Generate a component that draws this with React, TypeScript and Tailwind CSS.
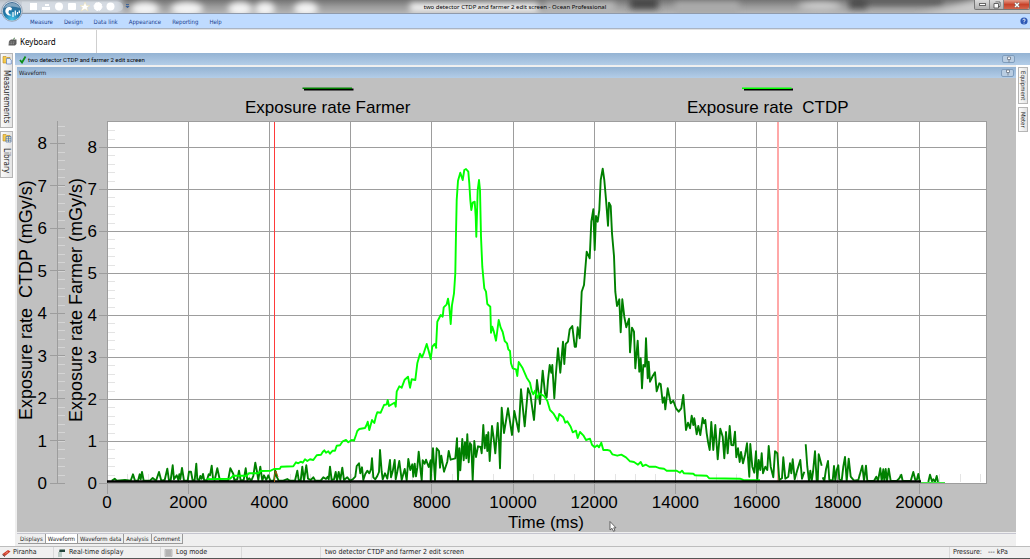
import type { ReactNode } from "react";
import clsx from "clsx";

type Segment = { x: number; y: number; pts: string };

const CTDP: Segment[] = [
  { x: 0, y: 290, pts: "620,568 690,566 700,557 740,557 746,550 775,550 782,543 812,542" },
  { x: 270, y: 380, pts: "12,267 30,266 33,260 70,259 78,247 85,250 92,245 98,248 105,238 112,243 120,238 130,240 140,226 153,224 158,216 163,211 168,218 175,214 180,221 188,212 195,212 200,197 210,196 218,184 228,180 235,187 245,180 252,182 258,165 262,153 268,147 285,144 290,134 293,125 298,150 306,120 313,129 318,108 322,97 332,98 342,75 350,73 353,60 357,78 367,72 374,68 377,80" },
  { x: 396, y: 335, pts: "2,170 10,154 17,158 26,134 36,125 42,158 47,133 58,135 64,85 72,56 78,67 84,52 92,27 98,48 104,72 109,35 116,27 121,38" },
  { x: 430, y: 150, pts: "18,593 22,515 32,495 38,500 41,472 50,463 54,446 58,470 62,522 66,465 72,430 76,370 78,250 80,150 84,92 91,68 98,90 103,60 108,57 115,65 118,100 121,150 124,180 128,158 134,155 137,200 139,260 143,120 147,90 150,120 153,260 157,350 163,415 168,425 172,462 181,470 183,548 187,530 191,543 198,572 206,510 212,533 218,546 224,573 231,580 235,598 240,603 243,640 248,655 258,658 262,678 266,636 278,655 290,683 300,698 305,722" },
  { x: 500, y: 360, pts: "95,93 100,103 105,92 112,114 118,100 132,108 142,122 150,150 160,160 173,182 178,162 190,172 196,188 202,184 212,200 218,217 228,212 233,234 240,216 250,226 258,240 270,236 276,254 284,262 292,256 297,262 304,248 310,270 322,270 330,272 337,283 352,287 364,284 378,292 390,304 402,306 414,314 422,306 428,318 438,314 448,320 466,320" },
  { x: 660, y: 370, pts: "0,295 12,296 20,302 50,302 60,308 66,302 72,310 100,311 105,316 140,317 148,325 240,326 250,330 300,331" },
];

const FARMER: Segment[] = [
  { x: 0, y: 290, pts: "335,572 344,566 350,572 375,570 392,572 399,553 405,572 414,572 419,553 422,568 426,546 431,572 450,572 458,564 468,572 477,546 484,572 494,570 502,536 507,572 512,570 518,526 522,568 530,556 535,570 538,553 541,567 546,534 552,572 563,572 567,545 573,545 578,572 584,570 589,521 592,568 598,570 601,558 605,566 609,552 613,572 621,570 626,553 630,556 635,527 639,566 644,570 652,535 660,572 684,572 691,535 700,552 703,570 712,568 717,542 722,572 731,570 737,535 742,570 748,565 754,572 760,558 766,518 771,545 775,570 781,530 787,572 792,556 799,570 805,556 811,572 820,572" },
  { x: 270, y: 380, pts: "12,302 16,272 20,290 26,302 40,302 52,297 60,302 75,302 82,272 86,300 92,302 97,260 102,302 109,256 114,296 122,300 130,292 136,302 152,302 160,292 168,297 173,290 176,298 180,260 185,300 192,298 197,276 201,302 206,276 211,300 217,263 222,300 232,292 240,302 248,298 256,290 260,258 267,250 271,280 276,262 280,300 286,282 292,272 298,280 303,268 306,235 310,292 316,298 322,288 327,276 330,210 335,275 338,298 345,280 352,296 360,240 363,292 368,274 374,240 377,298" },
  { x: 396, y: 335, pts: "4,410 10,378 17,435 26,402 32,436 37,372 43,405 49,388 52,425 56,386 60,424 64,398 68,350 74,410 77,436 80,376 86,386 90,374 98,396 104,376 104,436 111,340 117,436 122,340 129,348 132,398 136,362 144,410 154,380 158,348 164,374 178,370 183,310 186,436 190,340 193,406 199,312 203,376 207,322 211,370 214,298 218,382 222,324 226,330 230,436 235,318 240,366 246,334 254,336 257,355 262,270 266,340 271,300 274,348 277,292 281,378 288,273 293,310 298,355 305,264 309,320 312,400 317,218 324,294 336,220 348,300 355,228 368,290 375,163 386,274 396,160 403,178 414,255" },
  { x: 530, y: 150, pts: "21,690 30,762 38,662 45,730 50,742 54,690 59,645 64,668 67,645 73,745 78,668 84,595 91,668 99,575 103,642 107,582 114,575 119,538 127,528 134,590 138,590 143,532 149,565 155,425 162,405 170,305 179,325 184,215 190,178 194,300 198,198 203,215 208,180 212,90 218,56 223,90 228,148 234,227 237,158 242,168 246,250 252,318 256,425 261,468 268,448 272,547 277,448 283,500 289,532 297,506 300,607 306,533 312,545 316,655 323,572 328,665 332,625 336,715 340,645 345,650 348,565 353,685 356,635 360,695 368,678 375,667 380,724 388,700" },
  { x: 660, y: 370, pts: "2,42 8,98 13,82 16,118 23,55 32,100 40,92 48,115 56,125 64,115 70,75 78,180 84,158 90,175 95,137 100,165 103,145 110,193 115,168 121,195 128,144 132,160 136,150 140,190 144,215 149,240 154,156 160,240 166,165 173,268 181,176 188,200 193,265 198,186 203,250 209,168 214,225 220,226 225,185 229,262 234,235 239,276 243,246 249,280 255,255 261,220 268,320 271,222 277,290 283,308 288,244 292,330 296,270 301,300 305,250 309,310 316,290 322,300 326,228 332,290 340,322 345,244 352,250 358,330 366,325 370,262 376,326 385,320 390,280 394,310 398,268 404,328 412,300 421,270 426,326 433,305" },
  { x: 800, y: 400, pts: "17,133 22,200 27,243 31,212 35,243 39,216 45,154 50,243 53,243 56,163 65,197" },
  { x: 800, y: 400, pts: "68,232 73,243 78,208 84,183 88,240 98,242 102,198 106,242 110,210 115,196 118,238 125,242 130,200 135,171 140,243 146,176 152,230 162,242 175,240 180,222 187,197 192,242 198,197 202,243 222,243 229,230 234,243 241,205 245,243 250,208 253,243 257,207 261,243 266,206 272,243 290,243 297,236 304,224 308,243 332,243 340,216 346,240 351,238 355,222 359,243" },
  { x: 800, y: 400, pts: "385,246 390,224 396,244 400,238 405,246 410,228 414,246" },
];

const toPath = (segments: Segment[], join: boolean) =>
  segments
    .map((s, i) => {
      const pts = s.pts.split(" ").map(p => {
        const [px, py] = p.split(",").map(Number);
        return `${(s.x + px / 3).toFixed(1)} ${(s.y + py / 3).toFixed(1)}`;
      });
      return (join && i > 0 ? "L" : "M") + pts.join("L");
    })
    .join("");

const PLOT = { left: 107, right: 986, top: 121, bottom: 483 };
const xAt = (ms: number) => 107 + ms * 0.0406;
const farmerY = (v: number) => 483 - v * 42;
const ctdpY = (v: number) => 483 - v * 42.5;
const range = (n: number) => Array.from({ length: n }, (_, i) => i);

function WaveformChart() {
  return (
    <svg
      viewBox="17 78 999 454"
      className="block h-auto w-full bg-[#c0c0c0] font-['Liberation_Sans',Arial,sans-serif]"
      role="img"
      aria-label="Exposure rate waveforms"
      fontSize={17}
    >
      <rect x={PLOT.left} y={PLOT.top} width={PLOT.right - PLOT.left} height={PLOT.bottom - PLOT.top} fill="#fff" />

      {/* minor ticks */}
      <g stroke="#e4e4e4" shapeRendering="crispEdges">
        {range(43).map(i => (
          <line key={`f${i}`} x1={107} x2={115} y1={farmerY(i / 5) + 0.5} y2={farmerY(i / 5) + 0.5} />
        ))}
        {range(43).map(i => (
          <line key={`c${i}`} x1={58} x2={65} y1={ctdpY(i / 5) + 0.5} y2={ctdpY(i / 5) + 0.5} stroke="#d4d4d4" />
        ))}
        {range(44).map(i => (
          <line key={`x${i}`} x1={xAt(i * 500) + 0.5} x2={xAt(i * 500) + 0.5} y1={474} y2={482} />
        ))}
      </g>

      {/* grid and axes */}
      <g stroke="#9d9d9d" shapeRendering="crispEdges">
        {range(9).map(i => (
          <line key={`f${i}`} x1={99} x2={PLOT.right} y1={farmerY(i)} y2={farmerY(i)} />
        ))}
        {range(11).map(i => (
          <line key={`x${i}`} x1={xAt(i * 2000)} x2={xAt(i * 2000)} y1={PLOT.top} y2={494} />
        ))}
        {range(9).map(i => (
          <line key={`c${i}`} x1={50} x2={65} y1={ctdpY(i)} y2={ctdpY(i)} />
        ))}
        <line x1={57} x2={57} y1={121} y2={483} />
        <rect x={107} y={121} width={879} height={362} fill="none" />
      </g>

      <line x1={274.5} x2={274.5} y1={122} y2={482} stroke="#ff3a3a" />
      <line x1={778} x2={778} y1={122} y2={482} stroke="#ffa8a8" strokeWidth={2} />

      <g fill="none" strokeWidth={1.9} strokeLinejoin="round">
        <path d={toPath(FARMER.slice(0, 5), true)} stroke="#008000" />
        <path d={toPath(FARMER.slice(5), false)} stroke="#008000" />
        <path d={toPath(CTDP, true)} stroke="#00ff00" />
        <path d="M921 482.5H945" stroke="#3fe83f" strokeWidth={1} />
      </g>
      <line x1={107} x2={921} y1={481.5} y2={481.5} stroke="#000" strokeWidth={2.4} />
      <path d="M274.500 482V475L276 471L278 477" fill="none" stroke="#a05a10" strokeWidth={1} />

      {/* legend */}
      <path d="M304 89.500H353.500M744 89.500H793" stroke="#000" strokeWidth={2} />
      <path d="M302.500 88.300H352" stroke="#008000" strokeWidth={1.6} />
      <path d="M742 88.300H791.500" stroke="#00ff00" strokeWidth={1.6} />
      <text x={245} y={113}>Exposure rate Farmer</text>
      <text x={687} y={113} className="whitespace-pre">{"Exposure rate  CTDP"}</text>

      <g textAnchor="end">
        {range(9).map(i => (
          <text key={`c${i}`} x={47} y={ctdpY(i) + 6}>{i}</text>
        ))}
        {range(9).map(i => (
          <text key={`f${i}`} x={97} y={farmerY(i) + 6}>{i}</text>
        ))}
      </g>
      <g textAnchor="middle">
        {range(11).map(i => (
          <text key={i} x={xAt(i * 2000)} y={508}>{i * 2000}</text>
        ))}
        <text x={546} y={528}>Time (ms)</text>
      </g>
      <g fontSize={18}>
        <text transform="translate(32 420) rotate(-90)" className="whitespace-pre">{"Exposure rate  CTDP (mGy/s)"}</text>
        <text transform="translate(82 422) rotate(-90)">Exposure rate Farmer (mGy/s)</text>
      </g>

      {/* mouse pointer */}
      <path d="M610 521.500V530L612 528.300L613.500 531.300L615 530.500L613.700 527.800H616Z" fill="#fff" stroke="#444" strokeWidth={0.8} />
    </svg>
  );
}

function TitleBackdrop() {
  const glows = [[145, 18], [187, 20], [240, 16], [265, 14], [306, 16]];
  return (
    <svg className="absolute inset-0 h-full w-full" viewBox="0 0 1030 13" preserveAspectRatio="none" aria-hidden="true">
      <defs>
        <linearGradient id="glass" x2="0" y2="1">
          <stop offset="0" stopColor="#747474" />
          <stop offset="0.5" stopColor="#9a9a9a" />
          <stop offset="1" stopColor="#b4b4b4" />
        </linearGradient>
        <filter id="soft" x="-50%" y="-100%" width="200%" height="300%">
          <feGaussianBlur stdDeviation="3" />
        </filter>
      </defs>
      <rect width="1030" height="13" fill="url(#glass)" />
      <g filter="url(#soft)">
        <rect x="-10" y="-2" width="132" height="17" fill="#cbd2db" />
        {glows.map(([x, r]) => (
          <ellipse key={x} cx={x} cy="9" rx={r - 4} ry="7" fill="#f4f4f4" />
        ))}
        <rect x="410" y="3" width="128" height="9" fill="#f2f2f2" />
        <rect x="545" y="2" width="70" height="10" fill="#b8b8b8" />
        <rect x="630" y="-2" width="28" height="11" fill="#454545" />
        <rect x="675" y="2" width="64" height="12" fill="#aaaaaa" />
        <ellipse cx="820" cy="6" rx="22" ry="4" fill="#d0d0d0" />
        <rect x="849" y="-3" width="18" height="12" fill="#4d4d4d" />
        <rect x="867" y="-2" width="76" height="7" fill="#5a5a5a" />
        <path d="M920 15L975 0H1040V16Z" fill="#cacaca" />
      </g>
    </svg>
  );
}

function OceanLogo() {
  return (
    <svg viewBox="0 0 22 22" className="h-[22px] w-[22px]" aria-hidden="true">
      <defs>
        <radialGradient id="orb" cx="0.5" cy="0.95" r="0.9">
          <stop offset="0" stopColor="#49c8ec" />
          <stop offset="0.5" stopColor="#1f78a8" />
          <stop offset="1" stopColor="#3c6a92" />
        </radialGradient>
      </defs>
      <circle cx="11" cy="11" r="10.300" fill="#d5dfeb" stroke="#8b98a8" strokeWidth="0.8" />
      <circle cx="11" cy="11.200" r="9.200" fill="url(#orb)" />
      <path d="M3 8A9 9 0 0 1 19 8Q11 5 3 8" fill="#b5cbdc" opacity="0.6" />
      <path d="M11 8.500C8.500 5.500 4 7.500 4.300 11.500C4.600 14.500 8 16.500 10.500 15C8 14.500 7 12.500 7.700 11C8.300 9.700 9.800 9.800 10 11Z" fill="#fff" />
      <path d="M12 12V17M14.300 10.500V15.500M16.500 12V14.500M18.300 10.500V13" fill="none" stroke="#fff" strokeWidth="1.200" />
    </svg>
  );
}

function QuickAccess() {
  return (
    <svg viewBox="0 0 110 13" className="h-[13px] w-[110px]" aria-hidden="true">
      <path d="M0 1.500H95Q101 2 101 6.500T95 12H0" fill="#e6ebf0" opacity="0.4" />
      <g fill="#fff">
        <rect x="8" y="3" width="7" height="7" />
        <path d="M20 7H28V10H20M23 4H27V6H23" />
        <circle cx="37" cy="6.500" r="4" />
        <rect x="46" y="3" width="8" height="7" rx="1" />
        <path d="M63 2L64.500 5.500H68L65 7.500L66 11L63 9L59 11L60.500 7.500L58 5.500H61.500Z" stroke="#eadfae" strokeWidth="0.500" />
        <circle cx="76" cy="6.500" r="4" strokeDasharray="2 1" stroke="#fff" />
        <circle cx="88.500" cy="6.500" r="4" />
      </g>
      <path d="M104 4.500H107M104 6.300H107L105.500 7.800Z" stroke="#315b96" fill="#315b96" strokeWidth="0.800" />
    </svg>
  );
}

function FolderIcon({ library }: { library?: boolean }) {
  return (
    <svg viewBox="0 0 10 10" className="h-[10px] w-[10px] shrink-0" aria-hidden="true">
      <path d="M1 1.500H4L5 2.500H8V8H1Z" fill="#f5c94c" stroke="#b98a23" strokeWidth="0.600" />
      {library ? (
        <path d="M4 3.500H9V9H4ZM4 5.300H9M4 7.200H9M6.500 3.500V9" fill="#fff7bd" stroke="#496fb0" strokeWidth="0.700" />
      ) : (
        <path d="M4.500 3.500H7.500L9.300 5.200V9H4.500Z" fill="#e8f0ff" stroke="#5c7fba" strokeWidth="0.700" />
      )}
    </svg>
  );
}

function PanelButton({ label }: { label: string }) {
  return (
    <button aria-label={label} className="flex h-2 w-[13px] items-center justify-center rounded-xs border border-[#7f9dbd] bg-[#b9cde2]">
      <svg viewBox="0 0 8 7" className="h-[7px] w-2">
        <path d="M2.500 1H5.500V3.500H2.500ZM4 3.500V6.500" fill="#fff" stroke="#75808e" strokeWidth="0.900" />
      </svg>
    </button>
  );
}

function SideTab({ className, children }: { className?: string; children: ReactNode }) {
  return (
    <button className={clsx("flex flex-col items-center border border-[#b5b5b5] bg-linear-to-r from-[#fafafa] to-[#e4e4e4]", className)}>
      {children}
    </button>
  );
}

const MENU = ["Measure", "Design", "Data link", "Appearance", "Reporting", "Help"];
const TABS = ["Displays", "Waveform", "Waveform data", "Analysis", "Comment"];

export default function App() {
  return (
    <div className="flex min-h-screen flex-col bg-white font-['DejaVu_Sans_Condensed','DejaVu_Sans',sans-serif] text-[#1d1d1d]">
      <header className="relative">
        <div className="relative flex h-[13px] items-center justify-center">
          <TitleBackdrop />
          <div className="absolute top-0 left-[22px]">
            <QuickAccess />
          </div>
          <h1 className="relative font-['Noto_Sans','Open_Sans',sans-serif] text-[6px] leading-3 whitespace-nowrap text-black">
            two detector CTDP and farmer 2 edit screen - Ocean Professional
          </h1>
          <div className="absolute top-0 right-0 flex h-[10px] rounded-b-xs border border-t-0 border-[#777] bg-linear-to-b from-[#dcdcdc] to-[#b0b0b0]">
            <button aria-label="Minimize" className="flex w-[15px] items-center justify-center border-r border-[#888]">
              <span className="h-[3px] w-[7px] border border-[#666] bg-white" />
            </button>
            <button aria-label="Restore" className="flex w-[14px] items-center justify-center border-r border-[#888]">
              <svg viewBox="0 0 8 8" className="h-2 w-2">
                <path d="M2.500 1H7V5.500H5.500M1 2.500H5.500V7H1Z" fill="#fff" stroke="#555" strokeWidth="0.900" />
              </svg>
            </button>
            <button aria-label="Close" className="flex w-[25px] items-center justify-center rounded-br-xs bg-linear-to-b from-[#e29a88] via-[#c8422a] to-[#d2654c]">
              <svg viewBox="0 0 8 8" className="h-2 w-2">
                <path d="M2 2L6 6M6 2L2 6" stroke="#555" strokeWidth="2.400" />
                <path d="M2 2L6 6M6 2L2 6" stroke="#fff" strokeWidth="1.500" />
              </svg>
            </button>
          </div>
        </div>
        <nav className="flex h-4 items-center gap-[11px] border-t border-b border-t-[#8f9aab] border-b-[#a9b4c4] bg-[#bfdbff] pl-[30px] text-[6px] text-[#1b3f8f]">
          {MENU.map(m => (
            <button key={m} className="whitespace-nowrap">{m}</button>
          ))}
          <button aria-label="Help topics" className="mr-[2px] ml-auto">
            <svg viewBox="0 0 8 8" className="h-2 w-2">
              <circle cx="4" cy="4" r="3.600" fill="#2c57b5" />
              <path d="M2.800 3.200Q3 2 4.100 2T5.200 3.200Q5 3.900 4 4.400V5M4 5.700V6.500" fill="none" stroke="#fff" strokeWidth="0.900" />
            </svg>
          </button>
        </nav>
        <button aria-label="Application menu" className="absolute top-0 left-px">
          <OceanLogo />
        </button>
      </header>

      <div className="flex h-6 border-t border-[#e3e3e3] bg-white">
        <button className="flex w-[97px] items-center gap-[3px] border-r border-[#cfcfcf] pl-2 font-['Noto_Sans','Open_Sans',sans-serif] text-[8px] text-black">
          <svg viewBox="0 0 9 9" className="h-[9px] w-[9px]" aria-hidden="true">
            <path d="M1 4L3 2.500H8.500V7L7 8.500H0.500Z" fill="#5c5c5c" />
            <path d="M1.500 5H7M1.500 6.700H6.500" stroke="#b5b5b5" strokeWidth="0.700" strokeDasharray="1 0.700" />
            <path d="M5 2.500L7 0.800" stroke="#538353" />
          </svg>
          Keyboard
        </button>
      </div>

      <div className="flex flex-1">
        <aside className="flex w-[15px] flex-col items-start gap-[3px] text-[8px] leading-[11px]">
          <SideTab className="h-[75px] w-[13px] gap-[5px] pt-px">
            <FolderIcon />
            <span className="[writing-mode:vertical-rl]">Measurements</span>
          </SideTab>
          <SideTab className="h-[47px] w-[13px] gap-[5px] pt-px">
            <FolderIcon library />
            <span className="[writing-mode:vertical-rl]">Library</span>
          </SideTab>
        </aside>

        <main className="flex min-w-0 flex-1 flex-col bg-[#efefef]">
          <div className="flex h-3 items-center bg-linear-to-b from-[#94b3d3] to-[#b3cde8] pr-[15px] pl-1 text-[6px]">
            <svg viewBox="0 0 8 9" className="mr-px h-[9px] w-2" aria-hidden="true">
              <path d="M1 5L3 7.500L6.500 1.500" fill="none" stroke="#0c8f19" strokeWidth="1.800" />
            </svg>
            <span className="flex-1 font-[Roboto,sans-serif] text-black">two detector CTDP and farmer 2 edit screen</span>
            <PanelButton label="Pin document" />
          </div>

          <div className="flex flex-1">
            <section className="ml-[2px] flex min-w-0 flex-1 flex-col pt-[2px]">
              <div className="flex h-[11px] items-center justify-between bg-linear-to-b from-[#94b3d3] to-[#b3cde8] pr-[2px] pl-[2px] text-[6px]">
                <h2>Waveform</h2>
                <PanelButton label="Pin waveform" />
              </div>
              <WaveformChart />
              <div role="tablist" className="mt-px flex h-3 border-t border-[#c5c5cf] pl-px text-[6px]">
                {TABS.map(t => (
                  <button
                    key={t}
                    role="tab"
                    aria-selected={t === "Waveform"}
                    className={clsx(
                      "h-[10px] border-r border-b border-[#9a9a9a] px-[2px] leading-[9px] whitespace-nowrap",
                      t === "Waveform" && "bg-white"
                    )}
                  >
                    {t}
                  </button>
                ))}
              </div>
            </section>
            <aside className="flex w-[14px] flex-col items-center gap-[3px] bg-white pt-[2px] text-[6px] leading-2">
              <SideTab className="h-[37px] w-[10px] justify-center">
                <span className="[writing-mode:vertical-rl]">Equipment</span>
              </SideTab>
              <SideTab className="h-[25px] w-[10px] justify-center">
                <span className="[writing-mode:vertical-rl]">Meter</span>
              </SideTab>
            </aside>
          </div>
        </main>
      </div>

      <footer className="flex h-[13px] items-center border-t border-b border-t-[#bdbdbd] border-b-[#555] bg-[#f0f0f0] text-[7px]">
        <div className="flex w-[54px] items-center gap-[2px] border-r border-[#dadada] pl-[2px]">
          <svg viewBox="0 0 9 8" className="h-2 w-[9px]" aria-hidden="true">
            <path d="M0.500 5L6 1L8.500 2.500L3 7Z" fill="#cf3b25" />
            <path d="M0.500 5L3 7V8L0.500 6Z" fill="#4a1c16" />
            <path d="M3.500 4.500L6 2.800" stroke="#f2b3a8" strokeWidth="0.700" />
          </svg>
          Piranha
        </div>
        <div className="flex w-[107px] items-center gap-[3px] border-r border-[#dadada] pl-[3px]">
          <svg viewBox="0 0 9 8" className="h-2 w-[9px]" aria-hidden="true">
            <path d="M2.500 0.500H8V3H4V8H1.500Z" fill="#24463c" />
            <path d="M1 3H5V8H1Z" fill="#bccdc6" />
          </svg>
          Real-time display
        </div>
        <div className="flex w-[81px] items-center gap-[3px] border-r border-[#dadada] pl-[3px]">
          <svg viewBox="0 0 9 8" className="h-2 w-[9px]" aria-hidden="true">
            <path d="M1 0.500H8V7.500H1Z" fill="#fff" stroke="#999" strokeWidth="0.600" />
            <path d="M1.500 2H7.500M1.500 4H7.500M1.500 6H7.500" stroke="#555" strokeWidth="0.900" />
          </svg>
          Log mode
        </div>
        <div className="w-[79px] border-r border-[#dadada]">&nbsp;</div>
        <div className="flex-1 pl-[4px]">two detector CTDP and farmer 2 edit screen</div>
        <div className="w-[81px] border-l border-[#dadada] pl-[3px] whitespace-pre">{"Pressure:   --- kPa"}</div>
      </footer>
    </div>
  );
}
